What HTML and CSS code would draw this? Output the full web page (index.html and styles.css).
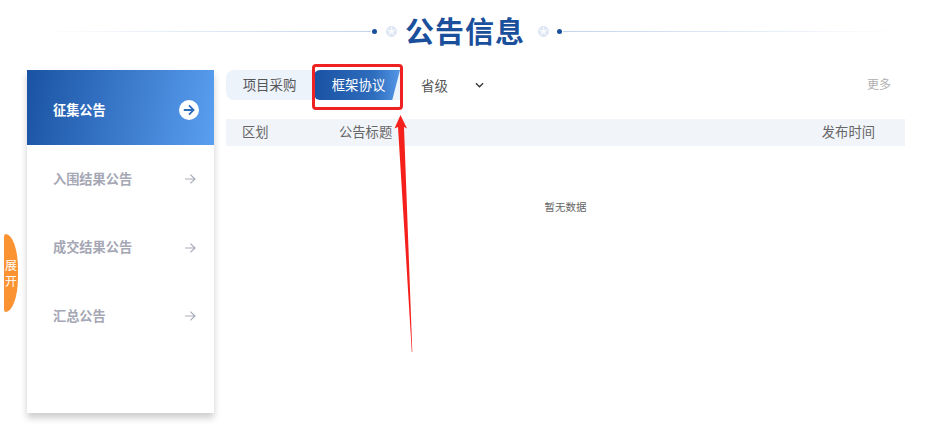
FILE: index.html
```html
<!DOCTYPE html>
<html lang="en">
<head>
    <meta charset="UTF-8">
    <meta name="viewport" content="width=device-width, initial-scale=1.0">
    <title>公告信息</title>
    <link rel="stylesheet" href="styles.css">
</head>
<body>
    <div class="page">
        <div class="title-row">
            <span class="title-line title-line-left"></span>
            <span class="title-dot"></span>
            <svg class="title-ball ball-left" viewBox="0 0 12 12"><circle cx="6" cy="6" r="5.4" fill="#e3eaf5" stroke="#d3ddee" stroke-width="1"/><path d="M6 3.8 8 5.3 7.3 7.6H4.7L4 5.3Z" fill="#fff"/><path d="M6 1v2.8M1.2 4.6l2.8.7M10.8 4.6 8 5.3M3 10.2l1.7-2.6M9 10.2 7.3 7.6" stroke="#fff" stroke-width=".8"/></svg>
            <h1 class="title-text">公告信息</h1>
            <svg class="title-ball ball-right" viewBox="0 0 12 12"><circle cx="6" cy="6" r="5.4" fill="#e3eaf5" stroke="#d3ddee" stroke-width="1"/><path d="M6 3.8 8 5.3 7.3 7.6H4.7L4 5.3Z" fill="#fff"/><path d="M6 1v2.8M1.2 4.6l2.8.7M10.8 4.6 8 5.3M3 10.2l1.7-2.6M9 10.2 7.3 7.6" stroke="#fff" stroke-width=".8"/></svg>
            <span class="title-dot"></span>
            <span class="title-line title-line-right"></span>
        </div>

        <div class="content">
            <div class="side">
                <div class="side-item side-item-active">
                    <span>征集公告</span>
                    <svg class="side-circle" viewBox="0 0 20 20"><circle cx="10" cy="10" r="10" fill="#fff"/><path d="M4.8 10h9.6M10 5.4l4.6 4.6-4.6 4.6" fill="none" stroke="#2f6cbb" stroke-width="1.8"/></svg>
                </div>
                <div class="side-item">
                    <span>入围结果公告</span>
                    <svg class="side-arrow" viewBox="0 0 12 12"><path d="M1 6h10M6.4 1.6 11 6l-4.6 4.4" fill="none" stroke="#a9adba" stroke-width="1.2"/></svg>
                </div>
                <div class="side-item">
                    <span>成交结果公告</span>
                    <svg class="side-arrow" viewBox="0 0 12 12"><path d="M1 6h10M6.4 1.6 11 6l-4.6 4.4" fill="none" stroke="#a9adba" stroke-width="1.2"/></svg>
                </div>
                <div class="side-item">
                    <span>汇总公告</span>
                    <svg class="side-arrow" viewBox="0 0 12 12"><path d="M1 6h10M6.4 1.6 11 6l-4.6 4.4" fill="none" stroke="#a9adba" stroke-width="1.2"/></svg>
                </div>
            </div>

            <div class="main">
                <div class="tabs">
                    <div class="tab-group">
                        <div class="tab">项目采购</div>
                        <div class="tab tab-active">框架协议</div>
                    </div>
                    <div class="select">
                        <span>省级</span>
                        <svg class="select-arrow" viewBox="0 0 10 6"><path d="M1 1l4 4 4-4" fill="none" stroke="#333" stroke-width="1.4"/></svg>
                    </div>
                    <div class="more">更多</div>
                </div>
                <div class="table-head">
                    <span class="col-area">区划</span>
                    <span class="col-title">公告标题</span>
                    <span class="col-time">发布时间</span>
                </div>
                <div class="empty">暂无数据</div>
            </div>
        </div>
    </div>

    <div class="expand">展开</div>

    <!-- annotation drawn on top of the screenshot -->
    <div class="mark-box"></div>
    <svg class="mark-arrow" viewBox="0 0 30 240"><path d="M12.5 0 19 13.5 16 12 24.3 237 23.8 237 10 12 6.5 13.5Z" fill="#f5201c"/></svg>
</body>
</html>
```

FILE: styles.css
```css
body {
    margin: 0;
    background: #fff;
    font-family: "Noto Sans CJK SC", "Liberation Sans", sans-serif;
    color: #555;
    overflow: hidden;
}

.page {
    width: 929px;
    height: 426px;
    padding-top: 12px;
    box-sizing: border-box;
}

.title-row {
    display: flex;
    align-items: center;
    height: 38px;
    padding: 0 29px 0 40px;
    margin-bottom: 20px;
}

.title-line {
    height: 1px;
}

.title-line-left {
    width: 331px;
    background: linear-gradient(90deg, #fff, #c3d4ed);
}

.title-line-right {
    flex: 1;
    background: linear-gradient(90deg, #c3d4ed, #fff);
}

.title-dot {
    width: 5px;
    height: 5px;
    border-radius: 50%;
    background: #1a4f9c;
    margin: 0 1px;
}

.title-ball {
    width: 11px;
    height: 11px;
}

.ball-left {
    margin: 0 8px 0 8px;
}

.ball-right {
    margin: 0 7px 0 13px;
}

.title-text {
    margin: 0 0 2px;
    font-size: 29px;
    line-height: 38px;
    font-weight: 700;
    letter-spacing: 1px;
    color: #1a4f9c;
}

.content {
    display: flex;
    padding-left: 27px;
    gap: 12px;
}

.side {
    width: 187px;
    height: 343px;
    background: #fff;
    box-shadow: 0 5px 7px rgba(0, 0, 0, 0.2);
}

.side-item {
    height: 68.5px;
    display: flex;
    align-items: center;
    justify-content: space-between;
    padding: 0 18px 0 26px;
    font-size: 13.2px;
    font-weight: 700;
    color: #a5a7b5;
}

.side-item span {
    margin-top: -2px;
}

.side-item-active {
    height: 75px;
    box-sizing: border-box;
    padding: 5px 15px 0 26px;
    color: #fff;
    background: linear-gradient(100deg, #1a52a3, #5a9ff0);
}

.side-circle {
    width: 20px;
    height: 20px;
}

.side-arrow {
    width: 12px;
    height: 12px;
}

.main {
    width: 679px;
}

.tabs {
    display: flex;
    align-items: center;
    height: 30px;
    margin-bottom: 19px;
}

.tab-group {
    display: flex;
    background: #edf3fb;
    border-radius: 8px 0 0 8px;
}

.tab {
    width: 87px;
    height: 30px;
    line-height: 28px;
    text-align: center;
    font-size: 13.4px;
    color: #555;
}

.tab-active {
    width: 86px;
    box-sizing: border-box;
    padding-left: 3px;
    margin-left: 1px;
    color: #fff;
    background: linear-gradient(90deg, #1a52a3, #2f6dbd 70%, #5596e6);
    border-radius: 6px 0 0 6px;
    clip-path: polygon(0 0, 100% 0, 91% 100%, 0 100%);
}

.select {
    display: flex;
    align-items: center;
    margin-left: 21px;
    font-size: 13.4px;
    line-height: 28px;
    height: 30px;
    color: #555;
}

.select-arrow {
    width: 9px;
    height: 6px;
    margin-left: 27px;
}

.more {
    margin-left: auto;
    margin-right: 14px;
    font-size: 12px;
    line-height: 28px;
    height: 30px;
    color: #b0b0b0;
}

.table-head {
    display: flex;
    align-items: center;
    height: 27px;
    box-sizing: border-box;
    padding-bottom: 3px;
    background: #f1f4f9;
    font-size: 13.3px;
    color: #666;
}

.col-area {
    width: 113px;
    box-sizing: border-box;
    padding-left: 16px;
}

.col-title {
    flex: 1;
}

.col-time {
    padding-right: 30px;
}

.empty {
    margin-top: 53px;
    text-align: center;
    font-size: 10.5px;
    line-height: 16px;
    color: #666;
}

.expand {
    position: absolute;
    left: 4px;
    top: 234px;
    width: 14px;
    height: 78px;
    box-sizing: border-box;
    padding-top: 23px;
    background: #fb9333;
    border-radius: 2px 14px 14px 2px / 4px 40px 40px 4px;
    font-size: 12px;
    line-height: 16px;
    text-align: center;
    color: #fff;
}

.mark-box {
    position: absolute;
    left: 312px;
    top: 64px;
    width: 85px;
    height: 40px;
    border: 3px solid #ee2222;
    border-radius: 4px;
}

.mark-arrow {
    position: absolute;
    left: 388px;
    top: 115px;
    width: 30px;
    height: 240px;
}
```
